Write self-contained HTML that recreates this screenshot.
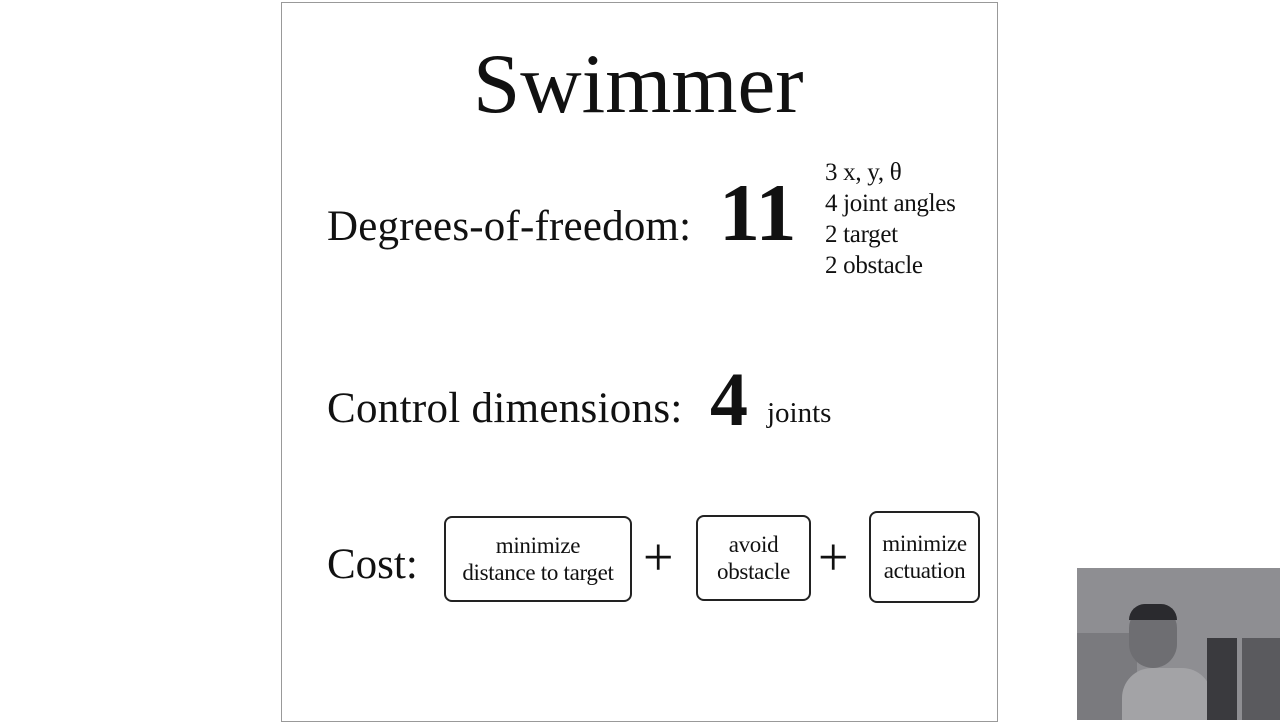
<!DOCTYPE html>
<html><head><style>
body{margin:0;width:1280px;height:720px;background:#fff;position:relative;overflow:hidden;font-family:"Liberation Serif",serif;color:#111}
.a{position:absolute;white-space:nowrap;line-height:1}
.slide{position:absolute;left:281px;top:2px;width:717px;height:720px;border:1px solid #999;box-sizing:border-box}
.box{position:absolute;border:2px solid #222;border-radius:8px;box-sizing:border-box;text-align:center;font-size:23px;line-height:27px;display:flex;align-items:center;justify-content:center;letter-spacing:-0.3px}
</style></head><body>
<div class="slide"></div>
<div class="a" style="left:473px;top:42px;font-size:85px">Swimmer</div>
<div class="a" style="left:327px;top:205px;font-size:43px;letter-spacing:0.2px">Degrees-of-freedom:</div>
<div class="a" style="left:719px;top:172px;font-size:82px;font-weight:bold">11</div>
<div class="a" style="left:825px;top:157px;font-size:25px;line-height:31px;letter-spacing:-0.3px">3 x, y, θ<br>4 joint angles<br>2 target<br>2 obstacle</div>
<div class="a" style="left:327px;top:387px;font-size:43px;letter-spacing:0.3px">Control dimensions:</div>
<div class="a" style="left:710px;top:362px;font-size:76px;font-weight:bold">4</div>
<div class="a" style="left:767px;top:399px;font-size:29px">joints</div>
<div class="a" style="left:327px;top:543px;font-size:43px">Cost:</div>
<div class="box" style="left:444px;top:516px;width:188px;height:86px">minimize<br>distance to target</div>
<div class="a" style="left:643px;top:530px;font-size:54px">+</div>
<div class="box" style="left:696px;top:515px;width:115px;height:86px">avoid<br>obstacle</div>
<div class="a" style="left:818px;top:530px;font-size:54px">+</div>
<div class="box" style="left:869px;top:511px;width:111px;height:92px">minimize<br>actuation</div>
<div style="position:absolute;left:1077px;top:568px;width:203px;height:152px;background:#8e8e92;overflow:hidden">
 <div style="position:absolute;left:0;top:65px;width:60px;height:87px;background:#7a7a7e"></div>
 <div style="position:absolute;left:45px;top:100px;width:90px;height:60px;background:#a3a3a6;border-radius:30px 30px 0 0"></div>
 <div style="position:absolute;left:52px;top:38px;width:48px;height:62px;background:#6e6e72;border-radius:22px 22px 24px 24px"></div>
 <div style="position:absolute;left:52px;top:36px;width:48px;height:16px;background:#2a2a2e;border-radius:20px 20px 0 0"></div>
 <div style="position:absolute;left:130px;top:70px;width:30px;height:90px;background:#3a3a3e"></div>
 <div style="position:absolute;left:165px;top:70px;width:38px;height:90px;background:#5a5a5e"></div>
</div>
</body></html>
